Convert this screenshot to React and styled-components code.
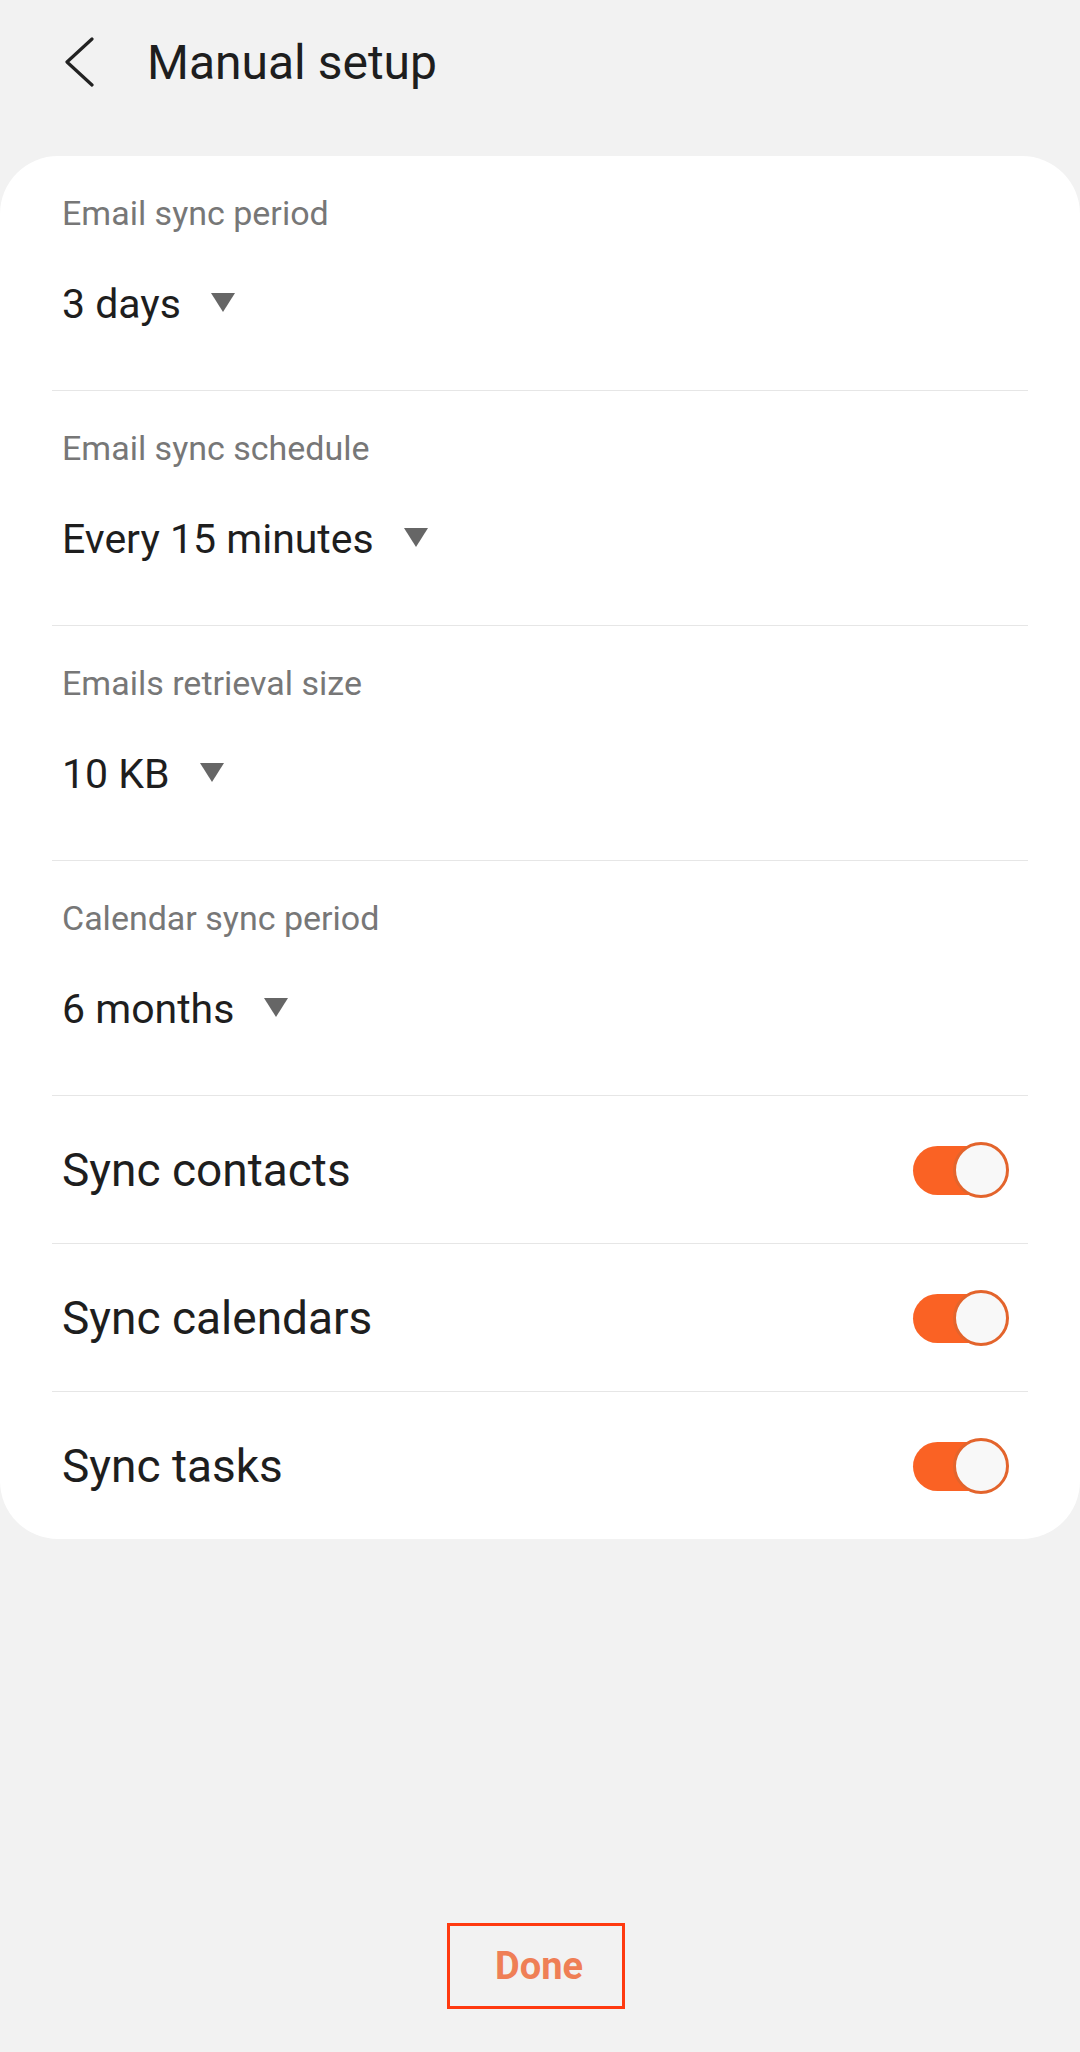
import styled, { createGlobalStyle } from "styled-components"

const GlobalStyle = createGlobalStyle`
body {
    margin: 0;
    background: #f2f2f2;
    font-family: Roboto, "Noto Sans", sans-serif;
}
`

const syncOptions = [
    { label: "Email sync period", value: "3 days" },
    { label: "Email sync schedule", value: "Every 15 minutes" },
    { label: "Emails retrieval size", value: "10 KB" },
    { label: "Calendar sync period", value: "6 months" },
]

const toggles = ["Sync contacts", "Sync calendars", "Sync tasks"]

export default function App() {
    return (
        <Page>
            <GlobalStyle />
            <Header>
                <BackButton aria-label="Back">
                    <svg width="30" height="50" viewBox="0 0 30 50">
                        <polyline points="27,2 2,25 27,48" fill="none" stroke="#222" strokeWidth="3.2" strokeLinecap="round" strokeLinejoin="round" />
                    </svg>
                </BackButton>
                <Title>Manual setup</Title>
            </Header>

            <Card>
                {syncOptions.map((item) => (
                    <Section key={item.label}>
                        <Label>{item.label}</Label>
                        <Dropdown>
                            {item.value}
                            <Arrow />
                        </Dropdown>
                    </Section>
                ))}
                {toggles.map((name, ind) => (
                    <ToggleRow key={name} $last={ind === toggles.length - 1}>
                        <ToggleLabel>{name}</ToggleLabel>
                        <Switch role="switch" aria-checked="true" />
                    </ToggleRow>
                ))}
            </Card>

            <Footer>
                <DoneButton>Done</DoneButton>
            </Footer>
        </Page>
    )
}

// whole screen
const Page = styled.div`
min-height: 2052px;
display: flex;
flex-direction: column;
`

const Header = styled.div`
height: 124px;
display: flex;
align-items: center;
padding-left: 65px;
margin-bottom: 32px;
`

const BackButton = styled.div`
width: 30px;
height: 50px;
display: flex;
margin-right: 52px;
`

const Title = styled.h1`
margin: 0;
font-size: 48px;
font-weight: 400;
color: #1e1e1e;
`

// white rounded panel with the settings
const Card = styled.div`
background: #ffffff;
border-radius: 58px;
padding: 0 52px;
`

const Section = styled.div`
padding: 37px 10px 62px;
border-bottom: 1px solid #e6e6e6;
`

const Label = styled.div`
font-size: 34px;
line-height: 40px;
color: #777777;
`

const Dropdown = styled.div`
margin-top: 47px;
display: flex;
align-items: center;
height: 48px;
font-size: 41px;
color: #1e1e1e;
`

const Arrow = styled.span`
width: 0;
height: 0;
margin-left: 30px;
margin-bottom: 4px;
border-left: 12px solid transparent;
border-right: 12px solid transparent;
border-top: 19px solid #666666;
`

const ToggleRow = styled.div`
height: 147px;
display: flex;
align-items: center;
justify-content: space-between;
padding: 0 19px 0 10px;
border-bottom: ${(props) => (props.$last ? "none" : "1px solid #e6e6e6")};
`

const ToggleLabel = styled.div`
font-size: 46px;
color: #1e1e1e;
`

const Switch = styled.div`
position: relative;
width: 96px;
height: 56px;
&::before {
    content: "";
    position: absolute;
    left: 0;
    top: 4px;
    width: 84px;
    height: 49px;
    border-radius: 25px;
    background: #fa6224;
}
&::after {
    content: "";
    position: absolute;
    right: 0;
    top: 0;
    width: 50px;
    height: 50px;
    border-radius: 50%;
    border: 3px solid #e3642c;
    background: #f8f8f8;
}
`

const Footer = styled.div`
flex: 1;
display: flex;
align-items: flex-end;
justify-content: center;
padding-bottom: 43px;
`

const DoneButton = styled.button`
width: 178px;
height: 86px;
margin-right: 8px;
padding: 0 0 0 6px;
border: 3px solid #ff3a10;
background: transparent;
color: #ef7f56;
font-family: Roboto, "Noto Sans", sans-serif;
font-size: 38px;
font-weight: 700;
`
